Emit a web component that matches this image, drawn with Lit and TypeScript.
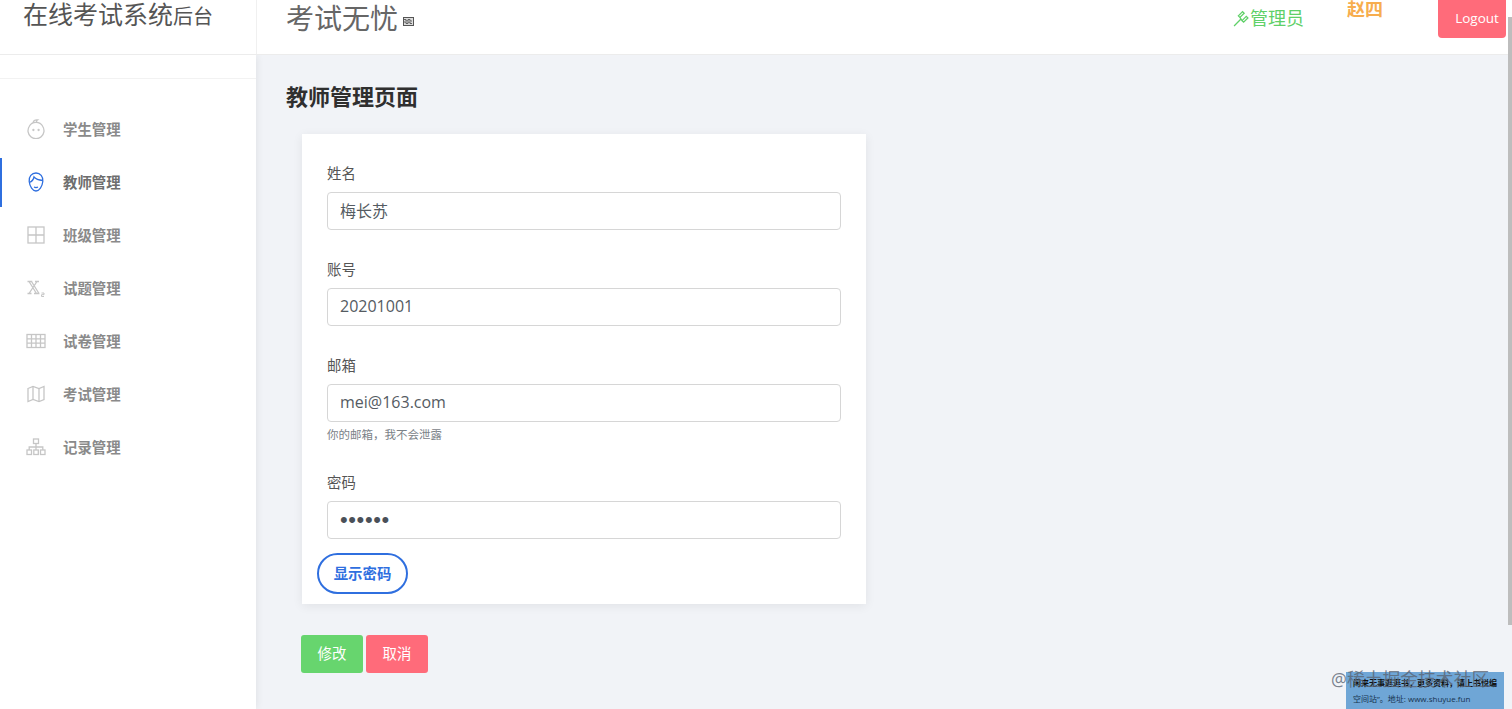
import { LitElement, html, css, svg } from "lit";
import { customElement } from "lit/decorators.js";

const icons = {
  baby: svg`<path d="M3.200 7.500a8 8 0 1 0 13.600 0C15.600 5.200 13.500 3.400 10 3.400S4.400 5.200 3.200 7.500z"/><path d="M7 3.800C7.500 2 9.300.8 11.500 1c-1 .6-1.300 1.700-.5 2.600"/><circle cx="7.400" cy="11" r=".5"/><circle cx="12.600" cy="11" r=".5"/>`,
  teacher: svg`<path d="M3.200 9.500C2.600 4.500 5.800 1 10 1s7.400 3.500 6.800 8.500c-.6 5.200-3.400 9.500-6.800 9.500S3.800 14.700 3.200 9.500z"/><path d="M3.300 10.500c2.700-1 4.200-3 4.700-5.500 1.600 1.800 4.200 3 8.700 3.500"/><path d="M8 15c1.300.7 2.700.7 4 0"/>`,
  grid: svg`<rect x="2" y="2" width="16" height="16"/><path d="M10 2v16M2 10h16"/>`,
  formula: svg`<path d="M1.500 3.500h4.800M9 3.500h4M1.500 15.500h4M8 15.500h5.500M3 3.500l7.500 12M5.500 3.500l7.500 12M11 3.500l-8 12"/><path d="M15.500 15h2.500v1.700h-2.500v1.800H18" stroke-width="1"/>`,
  table: svg`<rect x="1" y="3.500" width="18" height="13"/><path d="M1 7.800h18M1 12.200h18M5.500 3.500v13M10 3.500v13M14.500 3.500v13"/>`,
  map: svg`<path d="M2 4.500l5-2 6 2 5-2v13l-5 2-6-2-5 2z"/><path d="M7 2.500v13M13 4.500v13"/>`,
  sitemap: svg`<rect x="7.500" y="2" width="5" height="4.500"/><rect x="1" y="13" width="4.500" height="4.500"/><rect x="7.800" y="13" width="4.500" height="4.500"/><rect x="14.500" y="13" width="4.500" height="4.500"/><path d="M10 6.500V13M3.200 13v-3h13.600v3"/>`,
};

const nav = [
  { label: "学生管理", icon: icons.baby },
  { label: "教师管理", icon: icons.teacher, active: true },
  { label: "班级管理", icon: icons.grid },
  { label: "试题管理", icon: icons.formula },
  { label: "试卷管理", icon: icons.table },
  { label: "考试管理", icon: icons.map },
  { label: "记录管理", icon: icons.sitemap },
];

@customElement("app-root")
export class AppRoot extends LitElement {
  static styles = css`
    :host {
      display: block;
      height: 709px;
      overflow: hidden;
      position: relative;
      font-family: "Open Sans", "Noto Sans CJK SC", sans-serif;
      color: #495057;
      background: #f1f3f7;
    }
    * { box-sizing: border-box; }
    .header {
      height: 55px;
      display: flex;
      background: #fff;
      border-bottom: 1px solid #ececec;
      position: relative;
    }
    .logo {
      width: 257px;
      height: 54px;
      padding-left: 23px;
      border-right: 1px solid #f0f0f0;
      font-size: 25px;
      line-height: 28px;
      color: #555;
      white-space: nowrap;
    }
    .logo small { font-size: 20px; }
    .brand {
      margin-left: 29px;
      font-size: 28px;
      line-height: 36px;
      color: #666;
      display: flex;
      align-items: flex-start;
    }
    .mail { width: 11px; height: 9px; margin: 17px 0 0 5px; }
    .right {
      margin-left: auto;
      display: flex;
      align-items: flex-start;
      padding-right: 6px;
    }
    .role {
      display: flex;
      align-items: center;
      font-size: 18px;
      line-height: 36px;
      color: #5fd068;
    }
    .role svg { width: 17px; height: 17px; }
    .user {
      margin-left: 42px;
      margin-right: -1px;
      padding-left: 1px;
      font-size: 18px;
      line-height: 18px;
      font-weight: 700;
      color: #f7ad4e;
    }
    .logout {
      margin-left: 56px;
      width: 68px;
      height: 38px;
      padding: 0 0 3px 10px;
      border: 0;
      border-radius: 0 0 4px 4px;
      background: #ff6b7a;
      color: #fff;
      font: 13.500px "Open Sans", sans-serif;
    }
    .body { display: flex; height: 654px; }
    .side {
      width: 256px;
      flex: none;
      background: #fff;
      box-shadow: 0 0 8px rgba(0, 0, 0, .09);
    }
    .spacer { height: 24px; border-bottom: 1px solid #f2f2f2; }
    .nav { padding-top: 26px; display: flex; flex-direction: column; gap: 4px; }
    .item {
      height: 49px;
      display: flex;
      align-items: center;
      padding-left: 26px;
      gap: 17px;
      font-size: 14.400px;
      font-weight: 700;
      color: #8a8a8a;
      border-left: 2px solid transparent;
    }
    .item span { margin-bottom: 2px; }
    .item.active { border-left-color: #2f6fdf; color: #6e6e6e; }
    .item .ic {
      width: 20px;
      height: 20px;
      margin: 0 0 2px -2px;
      fill: none;
      stroke: #c6c6c6;
      stroke-width: 1.300;
      flex: none;
    }
    .item.active .ic { stroke: #2f6fdf; }
    .main { flex: 1; padding: 25px 0 0 30px; min-width: 0; }
    h1 {
      margin: 0 0 21px;
      font-size: 22px;
      line-height: 33px;
      font-weight: 700;
      color: #2f2f2f;
    }
    .card {
      margin-left: 16px;
      width: 564px;
      height: 470px;
      padding: 27px 25px 0;
      background: #fff;
      box-shadow: 0 2px 10px rgba(0, 0, 0, .07);
    }
    .group { margin-bottom: 27px; }
    label {
      display: block;
      font-size: 14.400px;
      line-height: 25px;
      margin-bottom: 6px;
      color: #555;
    }
    input {
      display: block;
      width: 100%;
      height: 38px;
      padding: 0 12px 2px;
      border: 1px solid #d6d6d6;
      border-radius: 4px;
      background: #fff;
      color: #555b62;
      font: 16px "Open Sans", "Noto Sans CJK SC", sans-serif;
    }
    input[type="password"] {
      padding-bottom: 0;
      font-family: "Liberation Sans", sans-serif;
      font-size: 22px;
      letter-spacing: .6px;
      color: #4a5058;
    }
    .hint {
      font-size: 11.500px;
      line-height: 17px;
      margin-top: 4px;
      color: #7b8288;
    }
    .group.pw { margin-bottom: 14px; }
    .show {
      display: block;
      margin-left: -10px;
      width: 91px;
      height: 41px;
      padding: 0 0 2px;
      border: 2px solid #2f6fdf;
      border-radius: 21px;
      background: #fff;
      color: #2f6fdf;
      font: 700 14.400px "Open Sans", "Noto Sans CJK SC", sans-serif;
    }
    .actions { display: flex; gap: 3px; margin: 31px 0 0 15px; }
    .actions button {
      width: 62px;
      height: 38px;
      padding: 0 0 3px;
      border: 0;
      border-radius: 3px;
      color: #fff;
      font: 14.400px "Open Sans", "Noto Sans CJK SC", sans-serif;
    }
    .ok { background: #67d56e; }
    .no { background: #ff6b7a; }
    .scroll {
      position: absolute;
      right: 0;
      top: 17px;
      width: 4px;
      height: 608px;
      background: #bdbdbd;
    }
    .ad {
      position: absolute;
      left: 1346px;
      top: 672px;
      width: 158px;
      height: 37px;
      background: #6fa6d6;
      color: #16334f;
      font-size: 8px;
      line-height: 16px;
      padding: 3px 0 0 7px;
      white-space: nowrap;
      overflow: hidden;
    }
    .ad b { font-weight: 700; color: #111; display: block; }
    .mark {
      position: absolute;
      left: 1331px;
      top: 667px;
      font-size: 17.800px;
      line-height: 25px;
      color: rgba(90, 100, 115, .8);
      white-space: nowrap;
    }
  `;

  render() {
    return html`
      <div class="header">
        <div class="logo">在线考试系统<small>后台</small></div>
        <div class="brand">
          考试无忧
          <svg class="mail" viewBox="0 0 11 9" aria-hidden="true">
            <rect x=".5" y=".5" width="10" height="8" fill="#ddd" stroke="#555"/>
            <path d="M1 2.500h2v1.500h2V2.500h2V4h2M1 5h2v1.500h2V5h2v1.500h2" fill="none" stroke="#555" stroke-width=".9"/>
          </svg>
        </div>
        <div class="right">
          <div class="role">
            <svg viewBox="0 0 16 16" fill="none" stroke="#5fd068" stroke-width="1.200" aria-hidden="true">
              <path d="M1 15l6.500-6.500M5 5.500L9 1.500l1.500 1.500L6.500 7zM8.500 10l4-4L14 7.500l-4 4zM6.500 7L8.500 10"/>
            </svg>
            管理员
          </div>
          <div class="user">赵四</div>
          <button class="logout">Logout</button>
        </div>
      </div>
      <div class="body">
        <aside class="side">
          <div class="spacer"></div>
          <nav class="nav">
            ${nav.map(
              (n) => html`<div class="item ${n.active ? "active" : ""}">
                <svg class="ic" viewBox="0 0 20 20" aria-hidden="true">${n.icon}</svg>
                <span>${n.label}</span>
              </div>`
            )}
          </nav>
        </aside>
        <main class="main">
          <h1>教师管理页面</h1>
          <div class="card">
            <div class="group"><label>姓名</label><input .value=${"梅长苏"} /></div>
            <div class="group"><label>账号</label><input .value=${"20201001"} /></div>
            <div class="group">
              <label>邮箱</label><input .value=${"mei@163.com"} />
              <div class="hint">你的邮箱，我不会泄露</div>
            </div>
            <div class="group pw"><label>密码</label><input type="password" .value=${"123456"} /></div>
            <button class="show">显示密码</button>
          </div>
          <div class="actions">
            <button class="ok">修改</button>
            <button class="no">取消</button>
          </div>
        </main>
      </div>
      <div class="scroll"></div>
      <div class="ad"><b>闲来无事逛逛书，更多资料，请上书悦编</b>空间站”。地址: www.shuyue.fun</div>
      <div class="mark">@稀土掘金技术社区</div>
    `;
  }
}
